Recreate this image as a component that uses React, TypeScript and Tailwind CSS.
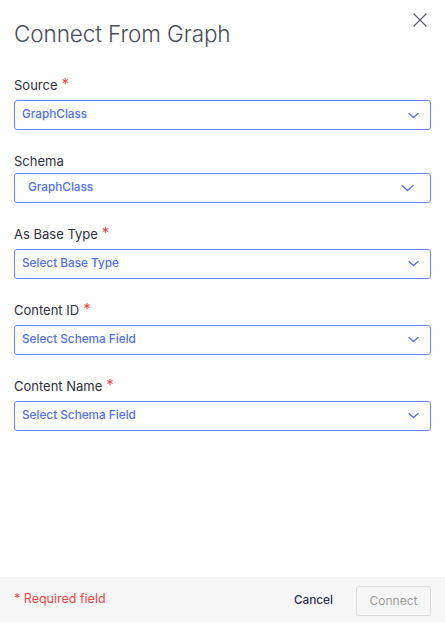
const FIELDS = [
  { id: "source", label: "Source", value: "GraphClass", required: true },
  { id: "schema", label: "Schema", value: "GraphClass", required: false, wide: true },
  { id: "base", label: "As Base Type", value: "Select Base Type", required: true },
  { id: "content-id", label: "Content ID", value: "Select Schema Field", required: true },
  { id: "content-name", label: "Content Name", value: "Select Schema Field", required: true },
];

function Chevron({ big }: { big?: boolean }) {
  return big ? (
    <svg width="13" height="8" viewBox="0 0 13 8" fill="none" className="text-[#4f6ff2]">
      <path d="M1 1.5l5.5 5 5.5-5" stroke="currentColor" strokeWidth="1.3" strokeLinecap="round" strokeLinejoin="round" />
    </svg>
  ) : (
    <svg width="11" height="7" viewBox="0 0 11 7" fill="none" className="text-[#4f6ff2]">
      <path d="M1 1.5l4.5 4 4.5-4" stroke="currentColor" strokeWidth="1.3" strokeLinecap="round" strokeLinejoin="round" />
    </svg>
  );
}

export default function App() {
  return (
    <div className="w-[445px] h-[624px] bg-white flex flex-col font-['Inter',sans-serif]">
      <div className="flex-1 px-[14px]">
        <div className="flex items-start justify-between pt-[19px]">
          <h1 className="text-[22.5px] leading-[30px] font-light text-[#4b4b5c] tracking-[-0.1px]">
            Connect From Graph
          </h1>
          <button className="mt-[-6px] mr-[4px] text-[#5c5a78]">
            <svg width="14" height="14" viewBox="0 0 14 14" fill="none">
              <path d="M1 1l12 12M13 1L1 13" stroke="currentColor" strokeWidth="1.2" strokeLinecap="round" />
            </svg>
          </button>
        </div>

        <div className="mt-[28px] flex flex-col gap-[23px]">
          {FIELDS.map((f) => (
            <div key={f.id} className={"flex flex-col " + (f.wide ? "gap-[2.6px]" : "gap-[6px]")}>
              <label className="text-[13px] leading-[17px] text-[#2f2f3d] flex items-start gap-[4px]">
                {f.label}
                {f.required && <span className="text-[#f04848] text-[15px] leading-[14px]">*</span>}
              </label>
              <div
                className={
                  "h-[30px] rounded-[3px] border-[1.5px] border-[#6a86f5] flex items-center justify-between " +
                  (f.wide ? "pl-[13px] pr-[16px]" : "pl-[7px] pr-[11px]")
                }
              >
                <span className="text-[11.75px] font-medium text-[#4f6ff2]">{f.value}</span>
                <Chevron big={f.wide} />
              </div>
            </div>
          ))}
        </div>
      </div>

      <div className="h-[45px] mb-[2px] bg-[#f6f6f6] flex items-center justify-between pl-[14px] pr-[14px]">
        <span className="text-[12.5px] text-[#f04848]">* Required field</span>
        <div className="mt-[3px] flex items-center gap-[23px]">
          <button className="text-[11.75px] font-medium text-[#2c2c54]">Cancel</button>
          <button className="w-[75px] h-[30px] rounded-[3px] border border-[#dcdcdc] text-[12px] text-[#9a9a9a]">
            Connect
          </button>
        </div>
      </div>
    </div>
  );
}
